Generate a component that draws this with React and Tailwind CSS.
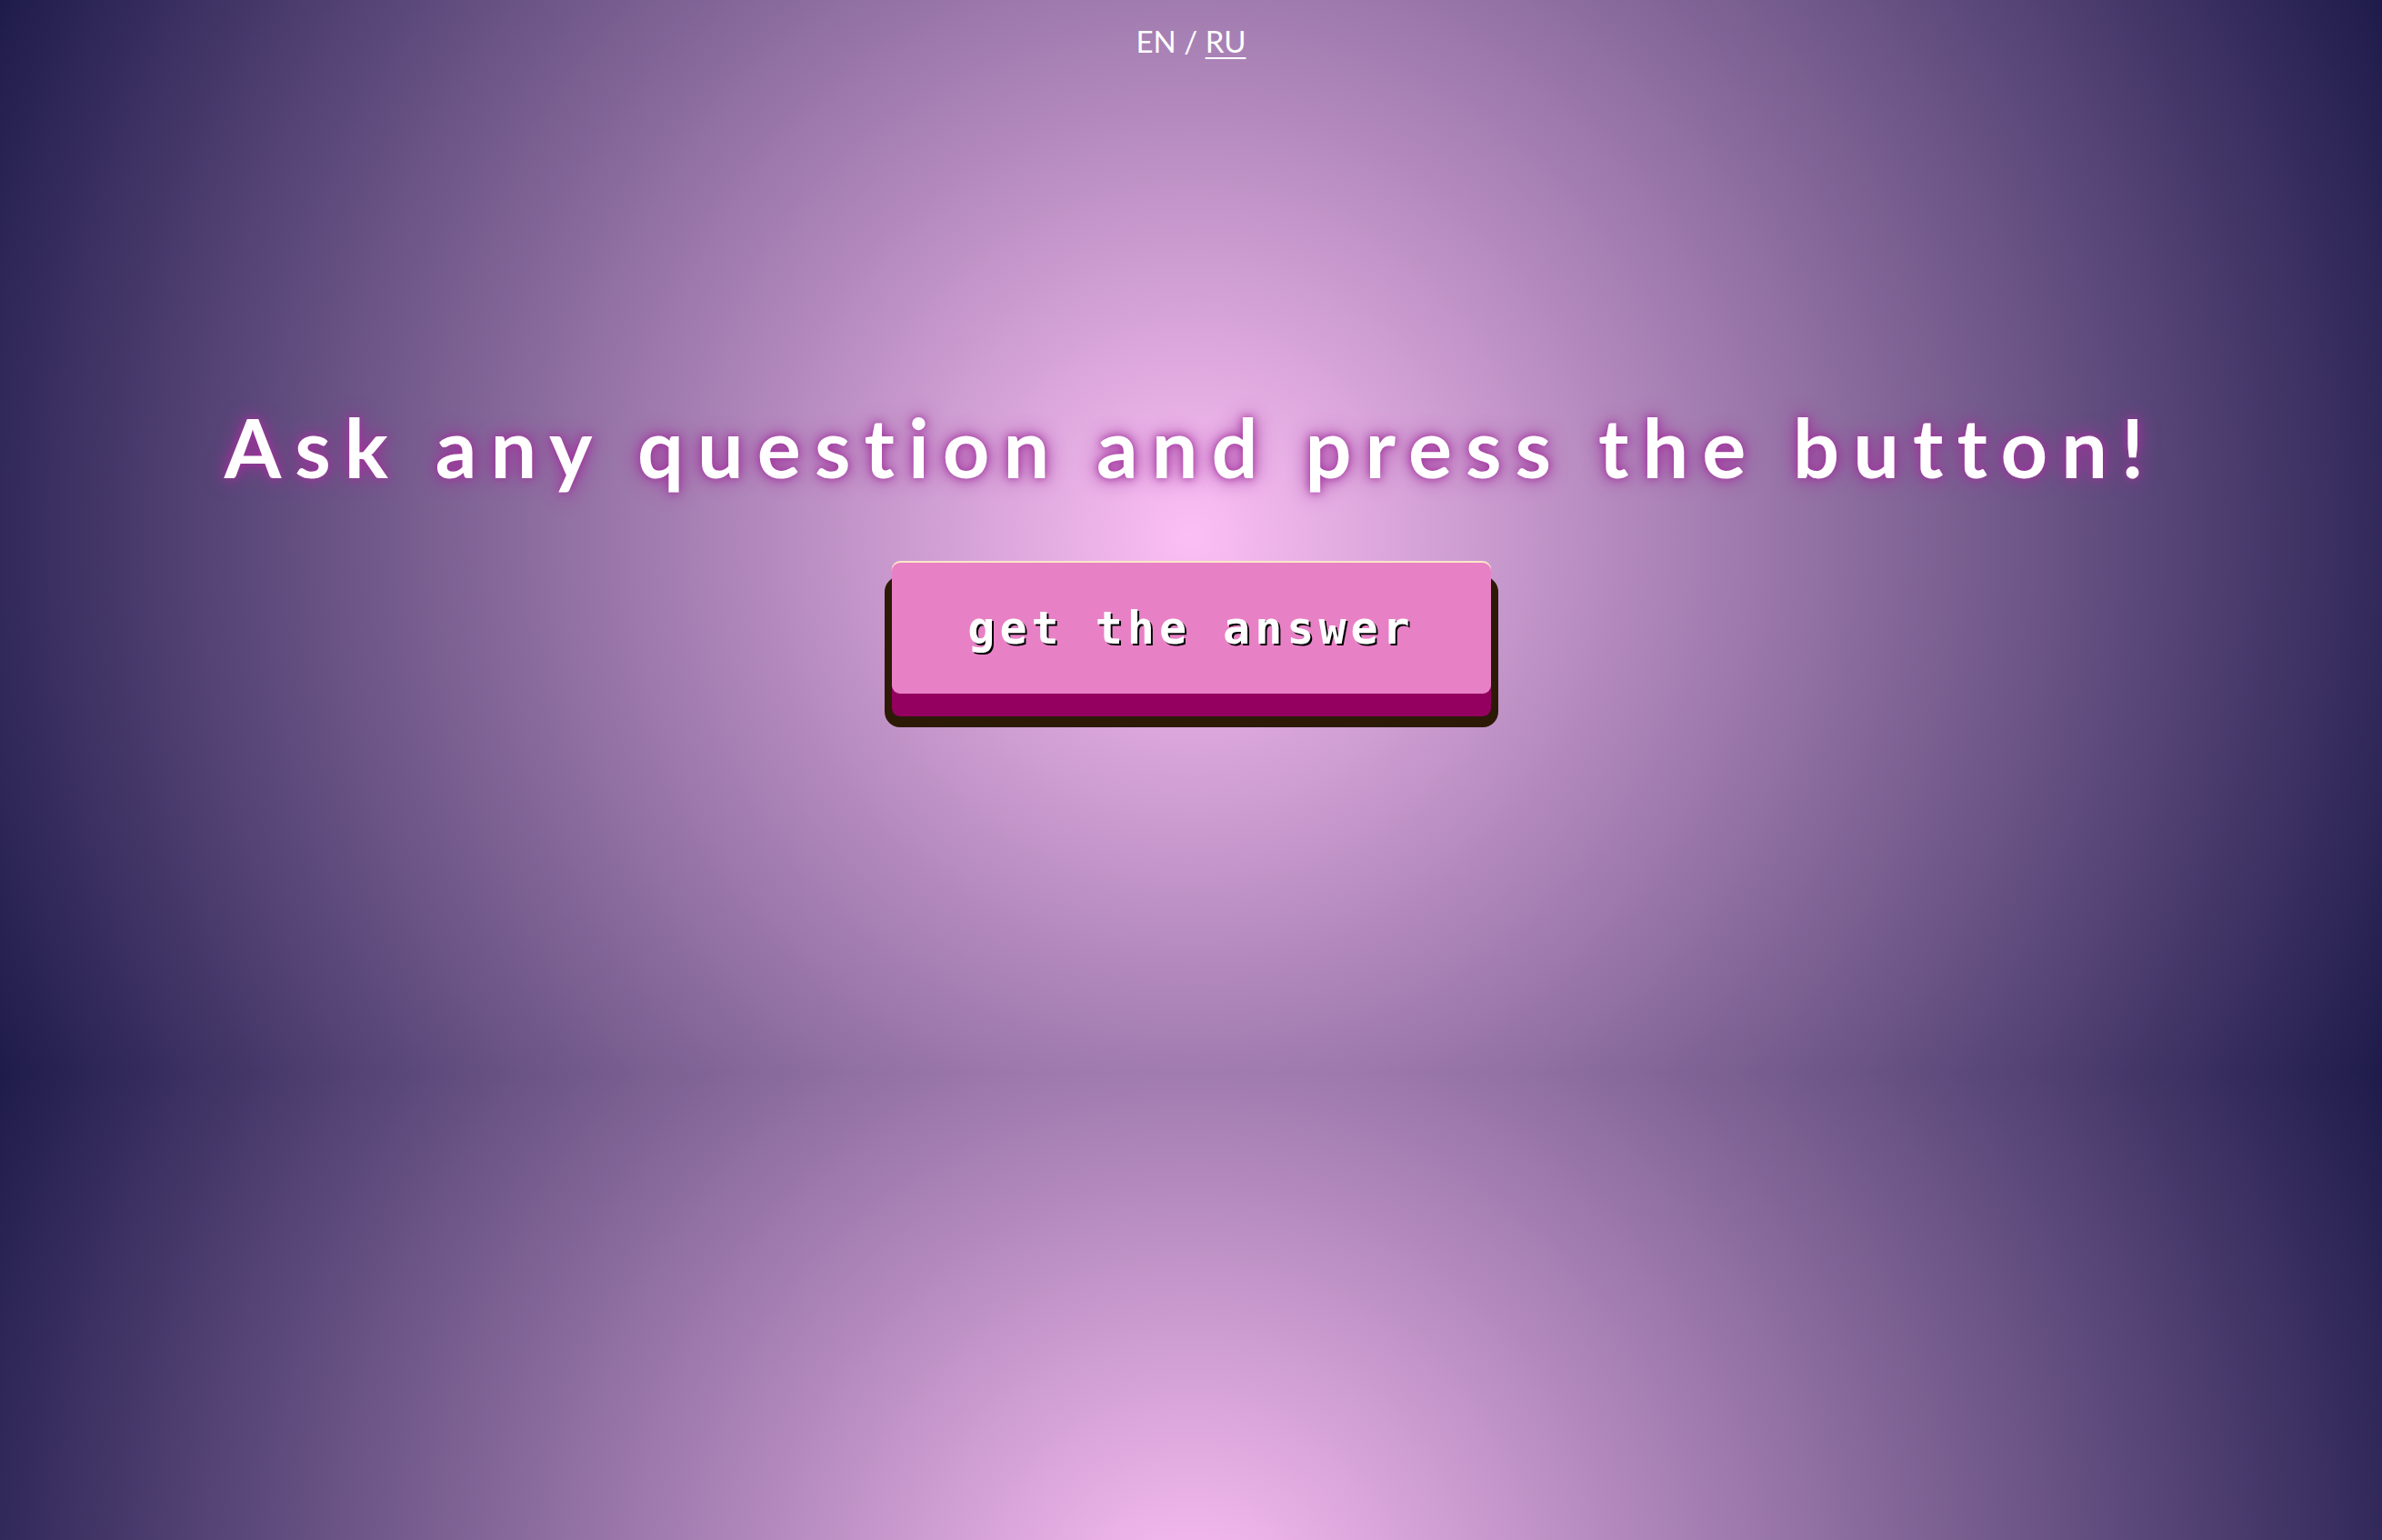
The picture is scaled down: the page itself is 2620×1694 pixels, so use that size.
export default function App() {
  return (
    <div className="w-full h-[1694px] overflow-hidden bg-[#1e1b4b] bg-[radial-gradient(circle,#fcbff5,#1e1b4b)] bg-[length:100%_1180px] bg-repeat-y flex flex-col items-center font-['Lato','Noto_Sans',sans-serif]">
      <div className="pt-[26px] text-[33px] leading-[38px] text-white">
        <span>EN</span>
        <span> / </span>
        <span className="underline underline-offset-[5px] decoration-2">RU</span>
      </div>
      <h1 className="mt-[373px] text-[90px] leading-[108px] font-bold text-white tracking-[15px] whitespace-nowrap [text-shadow:0_0_10px_#a0329c,0_0_22px_#a0329c]">
        Ask any question and press the button!
      </h1>
      <button className="mt-[74px] w-[659px] h-[144px] rounded-[9px] bg-[#e880c6] text-white font-['DejaVu_Sans_Mono',monospace] font-bold text-[50px] tracking-[5px] [text-shadow:2px_2px_0_#000] shadow-[0_-2px_0_0_#fde6c8,0_25px_0_0_#93005f,0_23px_0_8px_#2c1a06,0_29px_0_8px_#2c1a06]">
        get the answer
      </button>
    </div>
  );
}
